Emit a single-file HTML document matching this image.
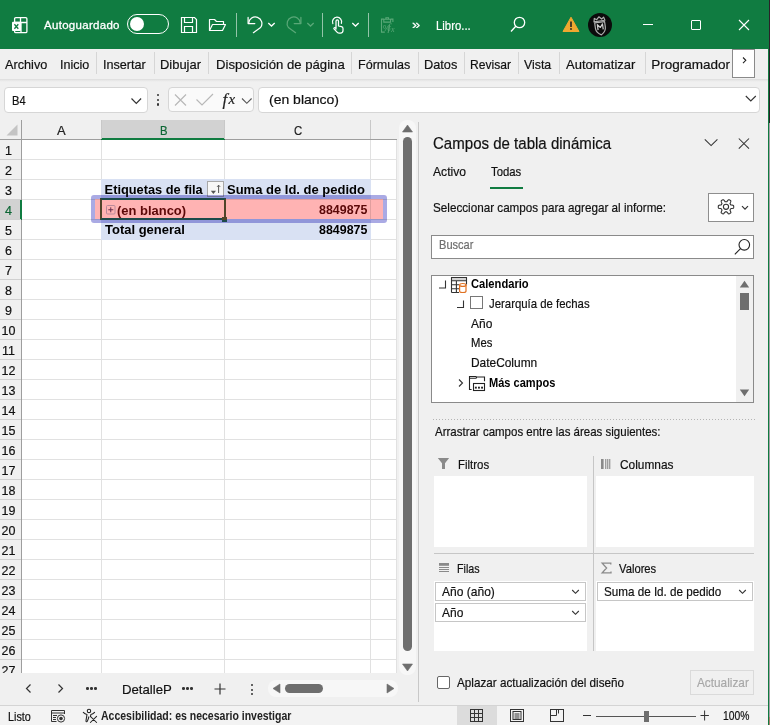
<!DOCTYPE html>
<html><head><meta charset="utf-8"><style>
html,body{margin:0;padding:0}
body{width:770px;height:725px;overflow:hidden;position:relative;background:#f0f0f0;font-family:"Liberation Sans",sans-serif}
.t{position:absolute;white-space:nowrap;line-height:1;-webkit-text-stroke:0.2px currentColor}
svg{overflow:visible}
</style></head><body>
<div style="position:absolute;left:0px;top:0px;width:770px;height:49px;background:#107c41"></div>
<svg style="position:absolute;left:11px;top:16px;" width="18" height="18" viewBox="0 0 18 18"><g fill="none" stroke="#fff" stroke-width="1.3"><rect x="3.6" y="1.6" width="12.3" height="15" rx="1.2"/><path d="M3.6 6.5h12.3M9.5 1.6v4.9M10 6.5v10"/></g><rect x="1" y="5.8" width="9" height="9.2" rx="1" fill="#fff"/><path d="M3.4 8.3l3.9 4.5M7.3 8.3l-3.9 4.5" stroke="#107c41" stroke-width="1.3"/></svg>
<div class="t" style="left:44.00px;top:20px;font-size:11.50px;color:#fff;letter-spacing:0.293px;-webkit-text-stroke:0.3px #fff;">Autoguardado</div>
<div style="position:absolute;left:127px;top:14px;width:40px;height:18px;border:1.2px solid #fff;border-radius:10px;box-sizing:content-box"></div>
<div style="position:absolute;left:129.5px;top:16.5px;width:14px;height:14px;background:#fff;border-radius:50%"></div>
<svg style="position:absolute;left:180px;top:16px;" width="18" height="18" viewBox="0 0 18 18"><g fill="none" stroke="#fff" stroke-width="1.2"><path d="M1.5 1.5h13l2 2v13h-15z"/><path d="M4.5 1.5v5h8v-5"/><path d="M4.5 16.5v-6h8v6"/></g></svg>
<svg style="position:absolute;left:208px;top:17px;" width="20" height="16" viewBox="0 0 20 16"><g fill="none" stroke="#fff" stroke-width="1.2" stroke-linejoin="round"><path d="M1.5 13.5v-11h5l2 2h7v3"/><path d="M1.5 13.5l3-6h13l-3 6z"/></g></svg>
<div style="position:absolute;left:236px;top:13px;width:1px;height:24px;background:rgba(255,255,255,.55)"></div>
<div style="position:absolute;left:322px;top:13px;width:1px;height:24px;background:rgba(255,255,255,.55)"></div>
<div style="position:absolute;left:368px;top:13px;width:1px;height:24px;background:rgba(255,255,255,.55)"></div>
<svg style="position:absolute;left:246px;top:15px;" width="20" height="20" viewBox="0 0 20 20"><g fill="none" stroke="#fff" stroke-width="1.25" stroke-linecap="round" stroke-linejoin="round"><path d="M2.1 2.4v6.2h6.7"/><path d="M2.7 8.2A6.6 6.6 0 1 1 14.6 12.5L7.4 17.7"/></g></svg>
<svg style="position:absolute;left:267px;top:21px;" width="10" height="7" viewBox="0 0 10 7"><path d="M1.3 2l3.2 3 3.2-3" fill="none" stroke="#fff" stroke-width="1.3"/></svg>
<svg style="position:absolute;left:283px;top:15px;" width="20" height="20" viewBox="0 0 20 20"><g transform="translate(20,0) scale(-1,1)" fill="none" stroke="#5aa878" stroke-width="1.25" stroke-linecap="round" stroke-linejoin="round"><path d="M2.1 2.4v6.2h6.7"/><path d="M2.7 8.2A6.6 6.6 0 1 1 14.6 12.5L7.4 17.7"/></g></svg>
<svg style="position:absolute;left:306px;top:21px;" width="10" height="7" viewBox="0 0 10 7"><path d="M1.3 2l3.2 3 3.2-3" fill="none" stroke="#5aa878" stroke-width="1.3"/></svg>
<svg style="position:absolute;left:330px;top:15px;" width="16" height="20" viewBox="0 0 16 20"><g fill="none" stroke="#fff" stroke-width="1.25" stroke-linecap="round" stroke-linejoin="round"><path d="M2.8 8.6A4.6 4.6 0 1 1 11.4 8.3"/><path d="M6 14V6.2a1.25 1.25 0 0 1 2.5 0V11l3 .6c.9.2 1.5 1 1.5 1.9v2c0 1.4-1.1 2.5-2.5 2.5H9c-.9 0-1.7-.4-2.2-1.1L4 13.8c-.5-.7.4-1.5 1.1-1L6 13.6"/></g></svg>
<svg style="position:absolute;left:351px;top:21px;" width="10" height="7" viewBox="0 0 10 7"><path d="M1.3 2l3.2 3 3.2-3" fill="none" stroke="#fff" stroke-width="1.3"/></svg>
<svg style="position:absolute;left:379px;top:16px;" width="18" height="18" viewBox="0 0 18 18"><g fill="none" stroke="#5aa878" stroke-width="1.1"><path d="M5.8 16.1H2.5V3.1h2.3M11.8 3.1h2.1V6"/><path d="M4.8 3.3h6.8v2.8H4.8zM6.9 3.3V1.8h2.6v1.5"/></g><text x="4" y="15" font-family="Liberation Sans" font-size="8.5" fill="#5aa878">%</text><text x="8.6" y="15.2" font-family="Liberation Serif" font-style="italic" font-size="11" fill="#5aa878">f</text><text x="12" y="15.6" font-family="Liberation Serif" font-style="italic" font-size="8" fill="#5aa878">x</text></svg>
<div class="t" style="left:411.50px;top:18px;font-size:13.00px;color:#fff;transform:scaleX(1.1365);transform-origin:0 0;">»</div>
<div class="t" style="left:436.30px;top:20px;font-size:12.50px;color:#fff;transform:scaleX(0.9087);transform-origin:0 0;">Libro...</div>
<svg style="position:absolute;left:509px;top:15px;" width="16" height="18" viewBox="0 0 16 18"><g fill="none" stroke="#fff" stroke-width="1.3"><circle cx="10.5" cy="7.5" r="5.2"/><path d="M6.8 11.3L2 16.5"/></g></svg>
<svg style="position:absolute;left:562px;top:16px;" width="18" height="17" viewBox="0 0 18 17"><path d="M9 1.2L17 15.5H1z" fill="#f0a830" stroke="#f0a830" stroke-linejoin="round"/><path d="M9 5.5v5.5" stroke="#222" stroke-width="1.6"/><circle cx="9" cy="13" r="0.9" fill="#222"/></svg>
<svg style="position:absolute;left:588px;top:13px;" width="24" height="24" viewBox="0 0 24 24"><circle cx="12" cy="12" r="12" fill="#0b0b0b"/><g transform="rotate(-8 12 12)" fill="none" stroke="#b0b0b0" stroke-width="1.2" stroke-linejoin="round"><path d="M6.5 8l.8-3.3 2.2 1.6 2.5-2.6 2.5 2.6 2.2-1.6.8 3.3z"/><path d="M7 9.2h10v5.6c0 3.2-2.4 5.6-5 7.2-2.6-1.6-5-4-5-7.2z"/><path d="M9.4 16.8v-5.6l2.6 3.3 2.6-3.3v5.6" stroke="#d0d0d0"/></g></svg>
<div style="position:absolute;left:643px;top:24px;width:10px;height:1px;background:#fff"></div>
<div style="position:absolute;left:691px;top:20px;width:10px;height:10px;border:1px solid #fff;border-radius:1px;box-sizing:border-box"></div>
<svg style="position:absolute;left:738px;top:19px;" width="12" height="12" viewBox="0 0 12 12"><path d="M1 1l10 10M11 1L1 11" stroke="#fff" stroke-width="1.1"/></svg>
<div style="position:absolute;left:0px;top:49px;width:768px;height:30px;background:#f0f0f0"></div>
<div style="position:absolute;left:0px;top:79px;width:768px;height:3px;background:linear-gradient(#dcdcdc,#eaeaea 60%,#f0f0f0)"></div>
<div class="t" style="left:5.20px;top:58px;font-size:13.50px;color:#111;transform:scaleX(0.9395);transform-origin:0 0;">Archivo</div>
<div class="t" style="left:60.30px;top:58px;font-size:13.50px;color:#111;transform:scaleX(0.9295);transform-origin:0 0;">Inicio</div>
<div class="t" style="left:103.40px;top:58px;font-size:13.50px;color:#111;transform:scaleX(0.9352);transform-origin:0 0;">Insertar</div>
<div class="t" style="left:160.40px;top:58px;font-size:13.50px;color:#111;transform:scaleX(0.9581);transform-origin:0 0;">Dibujar</div>
<div class="t" style="left:215.50px;top:58px;font-size:13.50px;color:#111;transform:scaleX(0.9745);transform-origin:0 0;">Disposición de página</div>
<div class="t" style="left:358.20px;top:58px;font-size:13.50px;color:#111;transform:scaleX(0.9308);transform-origin:0 0;">Fórmulas</div>
<div class="t" style="left:424.40px;top:58px;font-size:13.50px;color:#111;transform:scaleX(0.9451);transform-origin:0 0;">Datos</div>
<div class="t" style="left:470.40px;top:58px;font-size:13.50px;color:#111;transform:scaleX(0.8959);transform-origin:0 0;">Revisar</div>
<div class="t" style="left:524.20px;top:58px;font-size:13.50px;color:#111;transform:scaleX(0.9150);transform-origin:0 0;">Vista</div>
<div class="t" style="left:566.40px;top:58px;font-size:13.50px;color:#111;transform:scaleX(0.9622);transform-origin:0 0;">Automatizar</div>
<div class="t" style="left:651.20px;top:58px;font-size:13.50px;color:#111;">Programador</div>
<div style="position:absolute;left:96px;top:52px;width:1px;height:22px;background:#d6d6d6"></div>
<div style="position:absolute;left:154px;top:52px;width:1px;height:22px;background:#d6d6d6"></div>
<div style="position:absolute;left:208px;top:52px;width:1px;height:22px;background:#d6d6d6"></div>
<div style="position:absolute;left:351px;top:52px;width:1px;height:22px;background:#d6d6d6"></div>
<div style="position:absolute;left:418px;top:52px;width:1px;height:22px;background:#d6d6d6"></div>
<div style="position:absolute;left:464px;top:52px;width:1px;height:22px;background:#d6d6d6"></div>
<div style="position:absolute;left:518px;top:52px;width:1px;height:22px;background:#d6d6d6"></div>
<div style="position:absolute;left:559px;top:52px;width:1px;height:22px;background:#d6d6d6"></div>
<div style="position:absolute;left:645px;top:52px;width:1px;height:22px;background:#d6d6d6"></div>
<div style="position:absolute;left:732px;top:49px;width:23px;height:29px;background:#fff;border:1px solid #8a8a8a;box-sizing:border-box"></div>
<svg style="position:absolute;left:741px;top:56px;" width="7" height="9" viewBox="0 0 7 9"><path d="M2 1.5l2.8 2.8L2 7.1" fill="none" stroke="#222" stroke-width="1.1"/></svg>
<div style="position:absolute;left:4px;top:87px;width:144px;height:26px;background:#fff;border:1px solid #d6d6d6;border-radius:4px;box-sizing:border-box"></div>
<div class="t" style="left:11.70px;top:94px;font-size:13.50px;color:#111;transform:scaleX(0.8224);transform-origin:0 0;">B4</div>
<svg style="position:absolute;left:130px;top:97px;" width="13" height="8" viewBox="0 0 13 8"><path d="M1.5 1.5l4.8 4.8 4.8-4.8" fill="none" stroke="#333" stroke-width="1.2"/></svg>
<div style="position:absolute;left:156.5px;top:93.7px;width:2.4px;height:2.4px;background:#333;border-radius:50%"></div>
<div style="position:absolute;left:156.5px;top:98.6px;width:2.4px;height:2.4px;background:#333;border-radius:50%"></div>
<div style="position:absolute;left:156.5px;top:103.2px;width:2.4px;height:2.4px;background:#333;border-radius:50%"></div>
<div style="position:absolute;left:168px;top:87px;width:86px;height:25px;background:#fafafa;border:1px solid #d6d6d6;border-radius:4px;box-sizing:border-box"></div>
<svg style="position:absolute;left:173px;top:93px;" width="16" height="14" viewBox="0 0 16 14"><path d="M2 1.5l11 11M13 1.5l-11 11" stroke="#b8b8b8" stroke-width="1.2"/></svg>
<svg style="position:absolute;left:195px;top:93px;" width="20" height="13" viewBox="0 0 20 13"><path d="M1.5 6.5l5.5 5.5 11-11" fill="none" stroke="#b8b8b8" stroke-width="1.2"/></svg>
<div class="t" style="left:222.5px;top:90.5px;font-family:'Liberation Serif',serif;font-style:italic;font-size:17px;line-height:1;color:#222;">f</div>
<div class="t" style="left:228.5px;top:92px;font-family:'Liberation Serif',serif;font-style:italic;font-size:15px;line-height:1;color:#222;">x</div>
<svg style="position:absolute;left:241px;top:97px;" width="12" height="8" viewBox="0 0 12 8"><path d="M1 1.5l4.8 4.8 4.8-4.8" fill="none" stroke="#555" stroke-width="1.1"/></svg>
<div style="position:absolute;left:258px;top:87px;width:502px;height:26px;background:#fff;border:1px solid #d6d6d6;border-radius:4px;box-sizing:border-box"></div>
<div class="t" style="left:269.00px;top:93px;font-size:13.50px;color:#111;transform:scaleX(1.0360);transform-origin:0 0;">(en blanco)</div>
<svg style="position:absolute;left:744px;top:94px;" width="14" height="9" viewBox="0 0 14 9"><path d="M1.8 2l5 5 5-5" fill="none" stroke="#333" stroke-width="1.1"/></svg>
<div style="position:absolute;left:0px;top:120px;width:397px;height:20px;background:#f0f0f0"></div>
<div style="position:absolute;left:22px;top:140px;width:375px;height:533px;background:#fff"></div>
<div style="position:absolute;left:0px;top:140px;width:22px;height:533px;background:#f0f0f0"></div>
<svg style="position:absolute;left:6px;top:124px;" width="12" height="12" viewBox="0 0 12 12"><path d="M11.5 0.5V11.5H0.5z" fill="#c4c4c4"/></svg>
<div style="position:absolute;left:101px;top:120px;width:124px;height:20px;background:#d2d2d2"></div>
<div style="position:absolute;left:101px;top:138px;width:124px;height:2px;background:#107c41"></div>
<div style="position:absolute;left:0px;top:199px;width:21px;height:21px;background:#d2d2d2"></div>
<div style="position:absolute;left:0px;top:139px;width:101px;height:1px;background:#9e9e9e"></div>
<div style="position:absolute;left:225px;top:139px;width:172px;height:1px;background:#9e9e9e"></div>
<div style="position:absolute;left:21px;top:120px;width:1px;height:553px;background:#9e9e9e"></div>
<div style="position:absolute;left:20px;top:200px;width:2px;height:20px;background:#107c41"></div>
<div style="position:absolute;left:101px;top:120px;width:1px;height:19px;background:#c8c8c8"></div>
<div style="position:absolute;left:224px;top:120px;width:1px;height:19px;background:#c8c8c8"></div>
<div style="position:absolute;left:370px;top:120px;width:1px;height:19px;background:#c8c8c8"></div>
<div style="position:absolute;left:22px;top:159px;width:375px;height:1px;background:#e1e1e1"></div>
<div style="position:absolute;left:0px;top:159px;width:21px;height:1px;background:#d0d0d0"></div>
<div style="position:absolute;left:22px;top:179px;width:375px;height:1px;background:#e1e1e1"></div>
<div style="position:absolute;left:0px;top:179px;width:21px;height:1px;background:#d0d0d0"></div>
<div style="position:absolute;left:22px;top:199px;width:375px;height:1px;background:#e1e1e1"></div>
<div style="position:absolute;left:0px;top:199px;width:21px;height:1px;background:#d0d0d0"></div>
<div style="position:absolute;left:22px;top:219px;width:375px;height:1px;background:#e1e1e1"></div>
<div style="position:absolute;left:0px;top:219px;width:21px;height:1px;background:#d0d0d0"></div>
<div style="position:absolute;left:22px;top:239px;width:375px;height:1px;background:#e1e1e1"></div>
<div style="position:absolute;left:0px;top:239px;width:21px;height:1px;background:#d0d0d0"></div>
<div style="position:absolute;left:22px;top:259px;width:375px;height:1px;background:#e1e1e1"></div>
<div style="position:absolute;left:0px;top:259px;width:21px;height:1px;background:#d0d0d0"></div>
<div style="position:absolute;left:22px;top:279px;width:375px;height:1px;background:#e1e1e1"></div>
<div style="position:absolute;left:0px;top:279px;width:21px;height:1px;background:#d0d0d0"></div>
<div style="position:absolute;left:22px;top:299px;width:375px;height:1px;background:#e1e1e1"></div>
<div style="position:absolute;left:0px;top:299px;width:21px;height:1px;background:#d0d0d0"></div>
<div style="position:absolute;left:22px;top:319px;width:375px;height:1px;background:#e1e1e1"></div>
<div style="position:absolute;left:0px;top:319px;width:21px;height:1px;background:#d0d0d0"></div>
<div style="position:absolute;left:22px;top:339px;width:375px;height:1px;background:#e1e1e1"></div>
<div style="position:absolute;left:0px;top:339px;width:21px;height:1px;background:#d0d0d0"></div>
<div style="position:absolute;left:22px;top:359px;width:375px;height:1px;background:#e1e1e1"></div>
<div style="position:absolute;left:0px;top:359px;width:21px;height:1px;background:#d0d0d0"></div>
<div style="position:absolute;left:22px;top:379px;width:375px;height:1px;background:#e1e1e1"></div>
<div style="position:absolute;left:0px;top:379px;width:21px;height:1px;background:#d0d0d0"></div>
<div style="position:absolute;left:22px;top:399px;width:375px;height:1px;background:#e1e1e1"></div>
<div style="position:absolute;left:0px;top:399px;width:21px;height:1px;background:#d0d0d0"></div>
<div style="position:absolute;left:22px;top:419px;width:375px;height:1px;background:#e1e1e1"></div>
<div style="position:absolute;left:0px;top:419px;width:21px;height:1px;background:#d0d0d0"></div>
<div style="position:absolute;left:22px;top:439px;width:375px;height:1px;background:#e1e1e1"></div>
<div style="position:absolute;left:0px;top:439px;width:21px;height:1px;background:#d0d0d0"></div>
<div style="position:absolute;left:22px;top:459px;width:375px;height:1px;background:#e1e1e1"></div>
<div style="position:absolute;left:0px;top:459px;width:21px;height:1px;background:#d0d0d0"></div>
<div style="position:absolute;left:22px;top:479px;width:375px;height:1px;background:#e1e1e1"></div>
<div style="position:absolute;left:0px;top:479px;width:21px;height:1px;background:#d0d0d0"></div>
<div style="position:absolute;left:22px;top:499px;width:375px;height:1px;background:#e1e1e1"></div>
<div style="position:absolute;left:0px;top:499px;width:21px;height:1px;background:#d0d0d0"></div>
<div style="position:absolute;left:22px;top:519px;width:375px;height:1px;background:#e1e1e1"></div>
<div style="position:absolute;left:0px;top:519px;width:21px;height:1px;background:#d0d0d0"></div>
<div style="position:absolute;left:22px;top:539px;width:375px;height:1px;background:#e1e1e1"></div>
<div style="position:absolute;left:0px;top:539px;width:21px;height:1px;background:#d0d0d0"></div>
<div style="position:absolute;left:22px;top:559px;width:375px;height:1px;background:#e1e1e1"></div>
<div style="position:absolute;left:0px;top:559px;width:21px;height:1px;background:#d0d0d0"></div>
<div style="position:absolute;left:22px;top:579px;width:375px;height:1px;background:#e1e1e1"></div>
<div style="position:absolute;left:0px;top:579px;width:21px;height:1px;background:#d0d0d0"></div>
<div style="position:absolute;left:22px;top:599px;width:375px;height:1px;background:#e1e1e1"></div>
<div style="position:absolute;left:0px;top:599px;width:21px;height:1px;background:#d0d0d0"></div>
<div style="position:absolute;left:22px;top:619px;width:375px;height:1px;background:#e1e1e1"></div>
<div style="position:absolute;left:0px;top:619px;width:21px;height:1px;background:#d0d0d0"></div>
<div style="position:absolute;left:22px;top:639px;width:375px;height:1px;background:#e1e1e1"></div>
<div style="position:absolute;left:0px;top:639px;width:21px;height:1px;background:#d0d0d0"></div>
<div style="position:absolute;left:22px;top:659px;width:375px;height:1px;background:#e1e1e1"></div>
<div style="position:absolute;left:0px;top:659px;width:21px;height:1px;background:#d0d0d0"></div>
<div style="position:absolute;left:101px;top:140px;width:1px;height:533px;background:#e1e1e1"></div>
<div style="position:absolute;left:224px;top:140px;width:1px;height:533px;background:#e1e1e1"></div>
<div style="position:absolute;left:370px;top:140px;width:1px;height:533px;background:#e1e1e1"></div>
<div style="position:absolute;left:396px;top:140px;width:1px;height:533px;background:#e1e1e1"></div>
<div class="t" style="left:57.00px;top:125px;font-size:12.50px;color:#222;transform:scaleX(1.0388);transform-origin:0 0;">A</div>
<div class="t" style="left:159.50px;top:125px;font-size:12.50px;color:#0c6634;transform:scaleX(0.9023);transform-origin:0 0;">B</div>
<div class="t" style="left:294.20px;top:125px;font-size:12.50px;color:#222;transform:scaleX(0.9111);transform-origin:0 0;">C</div>
<div class="t" style="left:5.03px;top:145px;font-size:12.50px;color:#111;">1</div>
<div class="t" style="left:5.03px;top:165px;font-size:12.50px;color:#111;">2</div>
<div class="t" style="left:5.03px;top:185px;font-size:12.50px;color:#111;">3</div>
<div class="t" style="left:5.03px;top:205px;font-size:12.50px;color:#0c6634;">4</div>
<div class="t" style="left:5.03px;top:225px;font-size:12.50px;color:#111;">5</div>
<div class="t" style="left:5.03px;top:245px;font-size:12.50px;color:#111;">6</div>
<div class="t" style="left:5.03px;top:265px;font-size:12.50px;color:#111;">7</div>
<div class="t" style="left:5.03px;top:285px;font-size:12.50px;color:#111;">8</div>
<div class="t" style="left:5.03px;top:305px;font-size:12.50px;color:#111;">9</div>
<div class="t" style="left:1.56px;top:325px;font-size:12.50px;color:#111;">10</div>
<div class="t" style="left:2.00px;top:345px;font-size:12.50px;color:#111;">11</div>
<div class="t" style="left:1.56px;top:365px;font-size:12.50px;color:#111;">12</div>
<div class="t" style="left:1.56px;top:385px;font-size:12.50px;color:#111;">13</div>
<div class="t" style="left:1.56px;top:405px;font-size:12.50px;color:#111;">14</div>
<div class="t" style="left:1.56px;top:425px;font-size:12.50px;color:#111;">15</div>
<div class="t" style="left:1.56px;top:445px;font-size:12.50px;color:#111;">16</div>
<div class="t" style="left:1.56px;top:465px;font-size:12.50px;color:#111;">17</div>
<div class="t" style="left:1.56px;top:485px;font-size:12.50px;color:#111;">18</div>
<div class="t" style="left:1.56px;top:505px;font-size:12.50px;color:#111;">19</div>
<div class="t" style="left:1.56px;top:525px;font-size:12.50px;color:#111;">20</div>
<div class="t" style="left:1.56px;top:545px;font-size:12.50px;color:#111;">21</div>
<div class="t" style="left:1.56px;top:565px;font-size:12.50px;color:#111;">22</div>
<div class="t" style="left:1.56px;top:585px;font-size:12.50px;color:#111;">23</div>
<div class="t" style="left:1.56px;top:605px;font-size:12.50px;color:#111;">24</div>
<div class="t" style="left:1.56px;top:625px;font-size:12.50px;color:#111;">25</div>
<div class="t" style="left:1.56px;top:645px;font-size:12.50px;color:#111;">26</div>
<div class="t" style="left:1.56px;top:665px;font-size:12.50px;color:#111;">27</div>
<div style="position:absolute;left:101px;top:179px;width:270px;height:20px;background:#d9e1f3"></div>
<div style="position:absolute;left:101px;top:219px;width:270px;height:21px;background:#d9e1f3"></div>
<div class="t" style="left:104.60px;top:184px;font-size:12.80px;font-weight:bold;-webkit-text-stroke:0;color:#000;">Etiquetas de fila</div>
<div class="t" style="left:227.00px;top:184px;font-size:12.80px;font-weight:bold;-webkit-text-stroke:0;color:#000;transform:scaleX(1.0154);transform-origin:0 0;">Suma de Id. de pedido</div>
<div style="position:absolute;left:207px;top:181px;width:17px;height:16px;background:#f7f7f7;border:1px solid #a8a8a8;box-sizing:border-box"></div>
<svg style="position:absolute;left:208px;top:182px;" width="15" height="14" viewBox="0 0 15 14"><path d="M2.8 8.8h5.2l-2.6 3.1z" fill="#555"/><path d="M10.6 3.2v7.8M9.1 4.8l1.5-1.6 1.5 1.6" fill="none" stroke="#555" stroke-width="1"/></svg>
<div class="t" style="left:104.60px;top:224px;font-size:12.80px;font-weight:bold;-webkit-text-stroke:0;color:#000;transform:scaleX(1.0150);transform-origin:0 0;">Total general</div>
<div class="t" style="left:319.30px;top:224px;font-size:12.80px;font-weight:bold;-webkit-text-stroke:0;color:#000;transform:scaleX(0.9708);transform-origin:0 0;">8849875</div>
<div style="position:absolute;left:91px;top:195px;width:296px;height:28px;background:#ffb3b3;border:4px solid #aaaae4;border-radius:3px;box-sizing:border-box;mix-blend-mode:multiply"></div>
<div style="position:absolute;left:100px;top:198px;width:126px;height:22px;border:2px solid;border-color:#1d4a4a #50442a;box-sizing:border-box"></div>
<div style="position:absolute;left:222px;top:217px;width:5px;height:5px;background:#1d4a4a"></div>
<div style="position:absolute;left:222px;top:217px;width:5px;height:2.5px;background:#50442a"></div>
<svg style="position:absolute;left:106px;top:205px;" width="10" height="10" viewBox="0 0 10 10"><rect x="0.5" y="0.5" width="8.5" height="8.5" fill="none" stroke="#b98a9a" rx="1"/><path d="M4.75 2.3v5M2.3 4.75h5" stroke="#6a3050" stroke-width="1"/></svg>
<div class="t" style="left:117.30px;top:205px;font-size:12.80px;font-weight:bold;-webkit-text-stroke:0;color:#5c0808;transform:scaleX(1.0119);transform-origin:0 0;">(en blanco)</div>
<div class="t" style="left:319.30px;top:204px;font-size:12.80px;font-weight:bold;-webkit-text-stroke:0;color:#5c0808;transform:scaleX(0.9708);transform-origin:0 0;">8849875</div>
<div style="position:absolute;left:399px;top:120px;width:17px;height:555px;background:#f7f7f7;border-radius:8px"></div>
<svg style="position:absolute;left:402px;top:124px;" width="11" height="9" viewBox="0 0 11 9"><path d="M5.5 1L10.5 8H0.5z" fill="#6e6e6e" stroke="#6e6e6e" stroke-width="0.6" stroke-linejoin="round"/></svg>
<div style="position:absolute;left:403px;top:137px;width:9px;height:514px;background:#6e6e6e;border-radius:4.5px"></div>
<svg style="position:absolute;left:402px;top:663px;" width="11" height="9" viewBox="0 0 11 9"><path d="M5.5 8L10.5 1H0.5z" fill="#6e6e6e" stroke="#6e6e6e" stroke-width="0.6" stroke-linejoin="round"/></svg>
<div style="position:absolute;left:0px;top:673px;width:397px;height:32px;background:#f0f0f0"></div>
<svg style="position:absolute;left:23px;top:683px;" width="10" height="11" viewBox="0 0 10 11"><path d="M7.5 1.5l-4 4 4 4" fill="none" stroke="#333" stroke-width="1.2"/></svg>
<svg style="position:absolute;left:56px;top:683px;" width="10" height="11" viewBox="0 0 10 11"><path d="M2.5 1.5l4 4-4 4" fill="none" stroke="#333" stroke-width="1.2"/></svg>
<div style="position:absolute;left:86.0px;top:687.0999999999999px;width:2.6px;height:2.6px;background:#333;border-radius:50%"></div>
<div style="position:absolute;left:90.2px;top:687.0999999999999px;width:2.6px;height:2.6px;background:#333;border-radius:50%"></div>
<div style="position:absolute;left:94.4px;top:687.0999999999999px;width:2.6px;height:2.6px;background:#333;border-radius:50%"></div>
<div class="t" style="left:121.60px;top:683px;font-size:13.50px;color:#111;transform:scaleX(0.9759);transform-origin:0 0;">DetalleP</div>
<div style="position:absolute;left:182.0px;top:687.0999999999999px;width:2.6px;height:2.6px;background:#333;border-radius:50%"></div>
<div style="position:absolute;left:186.2px;top:687.0999999999999px;width:2.6px;height:2.6px;background:#333;border-radius:50%"></div>
<div style="position:absolute;left:190.4px;top:687.0999999999999px;width:2.6px;height:2.6px;background:#333;border-radius:50%"></div>
<svg style="position:absolute;left:213px;top:682px;" width="14" height="14" viewBox="0 0 14 14"><path d="M7 1.5v11M1.5 7h11" stroke="#333" stroke-width="1.2"/></svg>
<div style="position:absolute;left:251px;top:684px;width:2.4px;height:2.4px;background:#333;border-radius:50%"></div>
<div style="position:absolute;left:251px;top:688.5px;width:2.4px;height:2.4px;background:#333;border-radius:50%"></div>
<div style="position:absolute;left:251px;top:693px;width:2.4px;height:2.4px;background:#333;border-radius:50%"></div>
<div style="position:absolute;left:268px;top:680px;width:130px;height:17px;background:#f7f7f7;border-radius:8px"></div>
<svg style="position:absolute;left:272px;top:683px;" width="9" height="11" viewBox="0 0 9 11"><path d="M1 5.5L8 1v9z" fill="#6e6e6e" stroke="#6e6e6e" stroke-width="0.6" stroke-linejoin="round"/></svg>
<div style="position:absolute;left:285px;top:684px;width:38px;height:9px;background:#6e6e6e;border-radius:4.5px"></div>
<svg style="position:absolute;left:386px;top:683px;" width="9" height="11" viewBox="0 0 9 11"><path d="M8 5.5L1 1v9z" fill="#6e6e6e" stroke="#6e6e6e" stroke-width="0.6" stroke-linejoin="round"/></svg>
<div style="position:absolute;left:0px;top:705px;width:768px;height:1px;background:#d4d4d4"></div>
<div style="position:absolute;left:0px;top:706px;width:768px;height:19px;background:#f3f3f3"></div>
<div class="t" style="left:7.60px;top:711px;font-size:12.30px;color:#111;transform:scaleX(0.8785);transform-origin:0 0;">Listo</div>
<svg style="position:absolute;left:50px;top:709px;" width="16" height="14" viewBox="0 0 16 14"><g fill="none" stroke="#333" stroke-width="1"><path d="M1.5 1.5h13v3.5M1.5 1.5v11h5"/><path d="M1.5 4h13"/><path d="M3 6.5h4M3 8.5h3M3 10.5h3"/><circle cx="11" cy="9.5" r="3.6"/></g><circle cx="11" cy="9.5" r="1.8" fill="#333"/></svg>
<svg style="position:absolute;left:82px;top:708px;" width="16" height="16" viewBox="0 0 16 16"><g fill="none" stroke="#222" stroke-width="1.05" stroke-linecap="round" stroke-linejoin="round"><circle cx="7" cy="2.9" r="1.7"/><path d="M1.3 4.3c1.2 1.4 2.5 2 3.7 2.1L4 12.6c-.2 1.4.9 1.6 1.4.5l1.1-2.8"/><path d="M12.6 4.3c-1.2 1.4-2.5 2-3.7 2.1l-.5 2.2"/><path d="M8.4 8.4l6.2 6.1M14.6 8.4l-6.2 6.1"/></g><circle cx="6.6" cy="9.3" r=".8" fill="#222"/></svg>
<div class="t" style="left:101.30px;top:710px;font-size:12.50px;font-weight:bold;-webkit-text-stroke:0;color:#222;transform:scaleX(0.8406);transform-origin:0 0;">Accesibilidad: es necesario investigar</div>
<div style="position:absolute;left:457px;top:706px;width:40px;height:19px;background:#dcdcdc"></div>
<svg style="position:absolute;left:469px;top:708px;" width="15" height="15" viewBox="0 0 15 15"><g fill="none" stroke="#333" stroke-width="1"><rect x="1.5" y="1.5" width="12" height="12"/><path d="M5.5 1.5v12M9.5 1.5v12M1.5 5.5h12M1.5 9.5h12"/></g></svg>
<svg style="position:absolute;left:509px;top:708px;" width="16" height="15" viewBox="0 0 16 15"><g fill="none" stroke="#333" stroke-width="1"><rect x="1.5" y="1.5" width="13" height="12"/><rect x="4" y="3.5" width="8" height="8"/><path d="M5.5 6h5M5.5 8h5M5.5 10h5"/></g></svg>
<svg style="position:absolute;left:549px;top:708px;" width="16" height="15" viewBox="0 0 16 15"><g fill="none" stroke="#333" stroke-width="1"><rect x="1.5" y="1.5" width="13" height="12"/><path d="M7.5 1.5v6h-6M9.5 1.5v4"/></g></svg>
<div style="position:absolute;left:583px;top:715px;width:8px;height:1.2px;background:#333"></div>
<div style="position:absolute;left:596px;top:715.5px;width:100px;height:1px;background:#555"></div>
<div style="position:absolute;left:644px;top:710.5px;width:5px;height:11px;background:#6e6e6e"></div>
<svg style="position:absolute;left:700px;top:710px;" width="10" height="11" viewBox="0 0 10 11"><path d="M4.6 0.5v10M0.5 5.5h8.4" stroke="#333" stroke-width="1"/></svg>
<div class="t" style="left:722.60px;top:710px;font-size:12.30px;color:#111;transform:scaleX(0.8384);transform-origin:0 0;">100%</div>
<div style="position:absolute;left:418px;top:122px;width:1px;height:580px;background:#c8c8c8"></div>
<div class="t" style="left:432.50px;top:135px;font-size:16.30px;color:#111;transform:scaleX(0.9240);transform-origin:0 0;">Campos de tabla dinámica</div>
<svg style="position:absolute;left:703px;top:137px;" width="16" height="11" viewBox="0 0 16 11"><path d="M1.8 2.3l6.3 6.3 6.3-6.3" fill="none" stroke="#333" stroke-width="1.05"/></svg>
<svg style="position:absolute;left:737px;top:137px;" width="14" height="13" viewBox="0 0 14 13"><path d="M1.8 1.5l10.2 10.2M12 1.5L1.8 11.7" stroke="#333" stroke-width="1.05"/></svg>
<div class="t" style="left:432.50px;top:165px;font-size:13.00px;color:#111;transform:scaleX(0.9315);transform-origin:0 0;">Activo</div>
<div class="t" style="left:490.60px;top:165px;font-size:13.00px;color:#111;transform:scaleX(0.8701);transform-origin:0 0;">Todas</div>
<div style="position:absolute;left:490px;top:187px;width:33px;height:2px;background:#107c41"></div>
<div class="t" style="left:432.50px;top:201px;font-size:13.00px;color:#111;transform:scaleX(0.8986);transform-origin:0 0;">Seleccionar campos para agregar al informe:</div>
<div style="position:absolute;left:708px;top:193px;width:46px;height:29px;background:#fff;border:1px solid #8e8e8e;box-sizing:border-box"></div>
<svg style="position:absolute;left:716px;top:198px;" width="20" height="18" viewBox="0 0 20 18"><g fill="none" stroke="#333" stroke-width="1.1" stroke-linejoin="round"><path d="M10.00 3.70 L10.22 3.70 L10.44 3.72 L10.67 3.74 L10.91 3.65 L11.25 3.14 L11.66 2.62 L12.11 2.12 L12.59 1.69 L12.95 1.69 L13.25 1.82 L13.56 1.97 L13.85 2.13 L14.14 2.31 L14.42 2.49 L14.69 2.69 L14.87 3.00 L14.73 3.63 L14.53 4.27 L14.27 4.89 L14.01 5.44 L14.05 5.70 L14.18 5.87 L14.30 6.06 L14.42 6.25 L14.52 6.45 L14.62 6.64 L14.71 6.85 L14.91 7.01 L15.53 7.06 L16.18 7.14 L16.84 7.28 L17.45 7.49 L17.63 7.79 L17.67 8.13 L17.69 8.46 L17.70 8.80 L17.69 9.14 L17.67 9.47 L17.63 9.81 L17.45 10.11 L16.84 10.32 L16.18 10.46 L15.53 10.54 L14.91 10.59 L14.71 10.75 L14.62 10.96 L14.52 11.15 L14.42 11.35 L14.30 11.54 L14.18 11.73 L14.05 11.90 L14.01 12.16 L14.27 12.71 L14.53 13.33 L14.73 13.97 L14.87 14.60 L14.69 14.91 L14.42 15.11 L14.14 15.29 L13.85 15.47 L13.56 15.63 L13.25 15.78 L12.95 15.91 L12.59 15.91 L12.11 15.48 L11.66 14.98 L11.25 14.46 L10.91 13.95 L10.67 13.86 L10.44 13.88 L10.22 13.90 L10.00 13.90 L9.78 13.90 L9.56 13.88 L9.33 13.86 L9.09 13.95 L8.75 14.46 L8.34 14.98 L7.89 15.48 L7.41 15.91 L7.05 15.91 L6.75 15.78 L6.44 15.63 L6.15 15.47 L5.86 15.29 L5.58 15.11 L5.31 14.91 L5.13 14.60 L5.27 13.97 L5.47 13.33 L5.73 12.71 L5.99 12.16 L5.95 11.90 L5.82 11.73 L5.70 11.54 L5.58 11.35 L5.48 11.15 L5.38 10.96 L5.29 10.75 L5.09 10.59 L4.47 10.54 L3.82 10.46 L3.16 10.32 L2.55 10.11 L2.37 9.81 L2.33 9.47 L2.31 9.14 L2.30 8.80 L2.31 8.46 L2.33 8.13 L2.37 7.79 L2.55 7.49 L3.16 7.28 L3.82 7.14 L4.47 7.06 L5.09 7.01 L5.29 6.85 L5.38 6.64 L5.48 6.45 L5.58 6.25 L5.70 6.06 L5.82 5.87 L5.95 5.70 L5.99 5.44 L5.73 4.89 L5.47 4.27 L5.27 3.63 L5.13 3.00 L5.31 2.69 L5.58 2.49 L5.86 2.31 L6.15 2.13 L6.44 1.97 L6.75 1.82 L7.05 1.69 L7.41 1.69 L7.89 2.12 L8.34 2.62 L8.75 3.14 L9.09 3.65 L9.33 3.74 L9.56 3.72 L9.78 3.70Z"/><circle cx="10" cy="8.8" r="2.6"/></g></svg>
<svg style="position:absolute;left:741px;top:205px;" width="8" height="6" viewBox="0 0 8 6"><path d="M1 1.2l3 3 3-3" fill="none" stroke="#333" stroke-width="1.2"/></svg>
<div style="position:absolute;left:431px;top:235px;width:323px;height:24px;background:#fff;border:1px solid #8a8a8a;box-sizing:border-box"></div>
<div class="t" style="left:438.60px;top:238px;font-size:13.00px;color:#6e6e6e;transform:scaleX(0.8509);transform-origin:0 0;">Buscar</div>
<svg style="position:absolute;left:733px;top:238px;" width="19" height="18" viewBox="0 0 19 18"><g fill="none" stroke="#222" stroke-width="1.1"><circle cx="11.3" cy="6.8" r="5.3"/><path d="M7.5 10.6L1.8 16.3"/></g></svg>
<div style="position:absolute;left:431px;top:275px;width:323px;height:128px;background:#fff;border:1px solid #8a8a8a;box-sizing:border-box"></div>
<div style="position:absolute;left:736px;top:276px;width:17px;height:126px;background:#f0f0f0"></div>
<svg style="position:absolute;left:739px;top:280px;" width="11" height="8" viewBox="0 0 11 8"><path d="M5.5 0.8L10.2 7.4H0.8z" fill="#6e6e6e"/></svg>
<div style="position:absolute;left:740px;top:292.5px;width:9px;height:17.5px;background:#6e6e6e"></div>
<svg style="position:absolute;left:739px;top:389px;" width="11" height="8" viewBox="0 0 11 8"><path d="M5.5 7.2L10.2 0.6H0.8z" fill="#6e6e6e"/></svg>
<svg style="position:absolute;left:438px;top:280px;" width="9" height="9" viewBox="0 0 9 9"><path d="M7.5 0.5v7.5h-6.5" fill="none" stroke="#333" stroke-width="1.1"/></svg>
<svg style="position:absolute;left:450px;top:276px;" width="18" height="18" viewBox="0 0 18 18"><rect x="1.5" y="1.5" width="15" height="3.2" fill="#d4d4d4"/><g fill="none" stroke="#333" stroke-width="1.1"><path d="M1.5 16.5V1.5h15v7M1.5 4.7h15M6.4 4.7v11.8M1.5 8.7h7.5M1.5 12.7h7.5M1.5 16.5h7.5"/></g><g fill="#fff" stroke="#e07020" stroke-width="1.2"><path d="M9.6 9v6.2c0 .8 1 1.3 3.2 1.3s3.2-.5 3.2-1.3V9"/><path d="M9.6 9c0-1 1-1.5 3.2-1.5s3.2.5 3.2 1.5-1 1.4-3.2 1.4-3.2-.4-3.2-1.4z"/></g></svg>
<div class="t" style="left:470.50px;top:277px;font-size:13.00px;font-weight:bold;-webkit-text-stroke:0;color:#000;transform:scaleX(0.8585);transform-origin:0 0;">Calendario</div>
<svg style="position:absolute;left:456px;top:300px;" width="9" height="9" viewBox="0 0 9 9"><path d="M7.5 0.5v7h-6.5" fill="none" stroke="#333" stroke-width="1.1"/></svg>
<div style="position:absolute;left:470px;top:296px;width:13px;height:13px;background:#fff;border:1px solid #777;box-sizing:border-box"></div>
<div class="t" style="left:488.60px;top:297px;font-size:13.00px;color:#111;transform:scaleX(0.8754);transform-origin:0 0;">Jerarquía de fechas</div>
<div class="t" style="left:470.50px;top:317px;font-size:13.00px;color:#111;transform:scaleX(0.9205);transform-origin:0 0;">Año</div>
<div class="t" style="left:470.50px;top:336px;font-size:13.00px;color:#111;transform:scaleX(0.8669);transform-origin:0 0;">Mes</div>
<div class="t" style="left:470.50px;top:356px;font-size:13.00px;color:#111;transform:scaleX(0.9159);transform-origin:0 0;">DateColumn</div>
<svg style="position:absolute;left:457px;top:378px;" width="8" height="10" viewBox="0 0 8 10"><path d="M2 1.5l3.5 3.5-3.5 3.5" fill="none" stroke="#333" stroke-width="1.1"/></svg>
<svg style="position:absolute;left:468px;top:375px;" width="18" height="17" viewBox="0 0 18 17"><g fill="none" stroke="#222" stroke-width="1.1"><path d="M3.6 14.5H1.5V1.5H7.6a.9 .9 0 0 1 0 1.8H1.5M8.3 2H16.5V6.3"/><rect x="5.5" y="8.5" width="11" height="7"/></g><g fill="#222"><rect x="6.9" y="11.7" width="1.9" height="1.9"/><rect x="10" y="11.7" width="1.9" height="1.9"/><rect x="13.1" y="11.7" width="1.9" height="1.9"/></g></svg>
<div class="t" style="left:488.60px;top:376px;font-size:13.00px;font-weight:bold;-webkit-text-stroke:0;color:#000;transform:scaleX(0.8493);transform-origin:0 0;">Más campos</div>
<div style="position:absolute;left:433px;top:419px;width:322px;height:1px;background-image:linear-gradient(90deg,#b4b4b4 50%,transparent 50%);background-size:3px 1px"></div>
<div class="t" style="left:435.40px;top:425px;font-size:13.00px;color:#111;transform:scaleX(0.8841);transform-origin:0 0;">Arrastrar campos entre las áreas siguientes:</div>
<div style="position:absolute;left:593px;top:456px;width:1px;height:195px;background:#c6c6c6"></div>
<div style="position:absolute;left:434px;top:553px;width:320px;height:1px;background:#c6c6c6"></div>
<div style="position:absolute;left:434px;top:476px;width:153px;height:71px;background:#fff"></div>
<div style="position:absolute;left:596px;top:476px;width:158px;height:71px;background:#fff"></div>
<div style="position:absolute;left:434px;top:581px;width:153px;height:70px;background:#fff"></div>
<div style="position:absolute;left:596px;top:581px;width:158px;height:70px;background:#fff"></div>
<svg style="position:absolute;left:436px;top:457px;" width="15" height="13" viewBox="0 0 15 13"><path d="M1.8 1h11.3L9 6.2V12H6V6.2z" fill="#8a8a8a"/></svg>
<div class="t" style="left:457.50px;top:458px;font-size:13.00px;color:#111;transform:scaleX(0.8795);transform-origin:0 0;">Filtros</div>
<svg style="position:absolute;left:600px;top:458px;" width="12" height="12" viewBox="0 0 12 12"><g fill="#8a8a8a"><rect x="1" y="1" width="2.6" height="10"/><rect x="5.2" y="1" width="1.1" height="10"/><rect x="7.2" y="1" width="1.1" height="10"/><rect x="9.2" y="1" width="1.1" height="10"/></g></svg>
<div class="t" style="left:619.50px;top:458px;font-size:13.00px;color:#111;transform:scaleX(0.9145);transform-origin:0 0;">Columnas</div>
<svg style="position:absolute;left:438px;top:562px;" width="12" height="11" viewBox="0 0 12 11"><g fill="#8a8a8a"><rect x="1" y="1" width="10" height="2.8"/><rect x="1" y="5" width="10" height="1"/><rect x="1" y="7" width="10" height="1"/><rect x="1" y="9" width="10" height="1"/></g></svg>
<div class="t" style="left:457.30px;top:562px;font-size:13.00px;color:#111;transform:scaleX(0.8239);transform-origin:0 0;">Filas</div>
<svg style="position:absolute;left:601px;top:562px;" width="12" height="12" viewBox="0 0 12 12"><path d="M9.8 2.6V1.2H1.2l4.4 4.8-4.4 4.8h8.8V9.4" fill="none" stroke="#8a8a8a" stroke-width="1.3" stroke-linejoin="miter"/></svg>
<div class="t" style="left:619.40px;top:562px;font-size:13.00px;color:#111;transform:scaleX(0.8632);transform-origin:0 0;">Valores</div>
<div style="position:absolute;left:435px;top:582px;width:151px;height:19px;background:#fff;border:1px solid #c6c6c6;box-sizing:border-box"></div>
<div class="t" style="left:441.80px;top:585px;font-size:13.00px;color:#111;transform:scaleX(0.9252);transform-origin:0 0;">Año (año)</div>
<svg style="position:absolute;left:571px;top:589px;" width="9" height="6" viewBox="0 0 9 6"><path d="M1.2 1l3.3 3.3L7.8 1" fill="none" stroke="#333" stroke-width="1.1"/></svg>
<div style="position:absolute;left:435px;top:603px;width:151px;height:19px;background:#fff;border:1px solid #c6c6c6;box-sizing:border-box"></div>
<div class="t" style="left:441.80px;top:606px;font-size:13.00px;color:#111;transform:scaleX(0.9205);transform-origin:0 0;">Año</div>
<svg style="position:absolute;left:571px;top:610px;" width="9" height="6" viewBox="0 0 9 6"><path d="M1.2 1l3.3 3.3L7.8 1" fill="none" stroke="#333" stroke-width="1.1"/></svg>
<div style="position:absolute;left:597px;top:582px;width:156px;height:19px;background:#fff;border:1px solid #c6c6c6;box-sizing:border-box"></div>
<div class="t" style="left:604.20px;top:585px;font-size:13.00px;color:#111;transform:scaleX(0.8965);transform-origin:0 0;">Suma de Id. de pedido</div>
<svg style="position:absolute;left:738px;top:589px;" width="9" height="6" viewBox="0 0 9 6"><path d="M1.2 1l3.3 3.3L7.8 1" fill="none" stroke="#333" stroke-width="1.1"/></svg>
<div style="position:absolute;left:437px;top:676px;width:13px;height:13px;background:#fff;border:1px solid #666;border-radius:2px;box-sizing:border-box"></div>
<div class="t" style="left:457.40px;top:676px;font-size:13.00px;color:#111;transform:scaleX(0.8993);transform-origin:0 0;">Aplazar actualización del diseño</div>
<div style="position:absolute;left:690px;top:670px;width:64px;height:25px;background:#f0f0f0;border:1px solid #dadada;box-sizing:border-box"></div>
<div class="t" style="left:696.50px;top:676px;font-size:13.00px;color:#a8a8a8;transform:scaleX(0.9077);transform-origin:0 0;">Actualizar</div>
<div style="position:absolute;left:768px;top:0px;width:1px;height:725px;background:#107c41"></div>
<div style="position:absolute;left:769px;top:0px;width:1px;height:123px;background:#2a2228"></div>
<div style="position:absolute;left:769px;top:123px;width:1px;height:594px;background:#a8a0a8"></div>
<div style="position:absolute;left:769px;top:717px;width:1px;height:8px;background:#b08070"></div>
</body></html>
